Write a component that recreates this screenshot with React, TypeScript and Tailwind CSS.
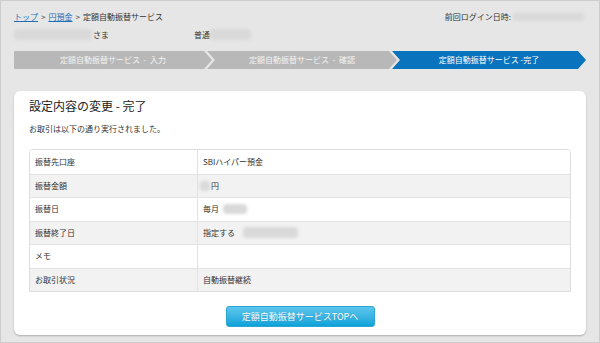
import React from 'react'

const jp = { fontFamily: '"Noto Sans CJK JP", "Noto Sans", sans-serif' }

function Blur({ className }: { className: string }) {
  return <span className={`inline-block rounded-sm bg-[#d9d9d9] blur-[1.5px] ${className}`} />
}

const steps = [
  { label: '定額自動振替サービス - 入力', active: false, width: 'w-[198px]' },
  { label: '定額自動振替サービス - 確認', active: false, width: 'w-[190px] -ml-[5px]' },
  { label: '定額自動振替サービス -完了', active: true, width: 'flex-1 -ml-[5px]' },
]

const rows: { label: string; value: React.ReactNode }[] = [
  { label: '振替先口座', value: 'SBIハイパー預金' },
  {
    label: '振替金額',
    value: (
      <span className="flex items-center gap-[1px]">
        <Blur className="w-[10px] h-[10px] -ml-[3px]" />
        円
      </span>
    ),
  },
  {
    label: '振替日',
    value: (
      <span className="flex items-center gap-[4px]">
        毎月
        <Blur className="w-[24px] h-[10px]" />
      </span>
    ),
  },
  {
    label: '振替終了日',
    value: (
      <span className="flex items-center gap-[8px]">
        指定する
        <Blur className="w-[55px] h-[11px]" />
      </span>
    ),
  },
  { label: 'メモ', value: '' },
  { label: 'お取引状況', value: '自動振替継続' },
]

export default function App() {
  return (
    <div
      style={jp}
      className="w-[600px] h-[343px] overflow-hidden bg-[#e6e6e6] border border-[#cdcdcd] px-[13px] pt-[9px] text-[#333] text-[8px]"
    >
      {/* Header */}
      <div className="flex items-center justify-between h-[13px]">
        <div className="flex items-center gap-[3px]">
          <a className="text-[#1f6fb5] underline">トップ</a>
          <span>&gt;</span>
          <a className="text-[#1f6fb5] underline">円預金</a>
          <span>&gt;</span>
          <span>定額自動振替サービス</span>
        </div>
        <div className="flex items-center gap-[2px] pr-[2px]">
          <span>前回ログイン日時:</span>
          <Blur className="w-[71px] h-[8px]" />
        </div>
      </div>
      <div className="flex items-center h-[13px] mt-[5px]">
        <Blur className="w-[78px] h-[11px]" />
        <span className="ml-[1px]">さま</span>
        <span className="ml-[85px]">普通</span>
        <Blur className="w-[41px] h-[11px]" />
      </div>

      {/* Steps */}
      <div className="flex h-[18px] mt-[10px]">
        {steps.map((s, i) => (
          <div
            key={s.label}
            className={`${s.width} flex items-center justify-center whitespace-pre ${
              i === 0
                ? '[clip-path:polygon(0_0,calc(100%-8px)_0,100%_50%,calc(100%-8px)_100%,0_100%)]'
                : '[clip-path:polygon(0_0,calc(100%-8px)_0,100%_50%,calc(100%-8px)_100%,0_100%,8px_50%)]'
            } ${s.active ? 'bg-[#0a73bd] text-white' : 'bg-[#b8b8b8] text-[#f3f3f3]'}`}
          >
            {s.label.replace(' - ', '  -  ')}
          </div>
        ))}
      </div>

      {/* Card */}
      <div className="mt-[22px] h-[244px] bg-white rounded-[6px] shadow-[0_1px_2px_rgba(0,0,0,0.25)] px-[15px] pt-[7px] flex flex-col">
        <h1 className="text-[12px] leading-[16px] text-[#222] whitespace-pre">設定内容の変更 - 完了</h1>
        <p className="mt-[9px] leading-[12px]">お取引は以下の通り実行されました。</p>

        <div className="mt-[14px] border border-[#dedede] rounded-t-[4px] overflow-hidden">
          {rows.map((r, i) => (
            <div
              key={r.label}
              className={`flex h-[23.5px] ${i > 0 ? 'border-t border-[#e2e2e2]' : ''} ${
                i % 2 === 1 ? 'bg-[#f2f2f2]' : 'bg-white'
              }`}
            >
              <div className="w-[168px] flex items-center pl-[5px] border-r border-[#e2e2e2]">{r.label}</div>
              <div className="flex-1 flex items-center pl-[5px]">{r.value}</div>
            </div>
          ))}
        </div>

        <div className="flex justify-center mt-[14px]">
          <button className="w-[149px] h-[21px] rounded-[3px] border border-[#2aa5d6] bg-gradient-to-b from-[#5ac6ec] to-[#03a2d9] text-white text-[9px] [text-shadow:0_0_1px_rgba(0,0,0,0.2)]">
            定額自動振替サービスTOPへ
          </button>
        </div>
      </div>
    </div>
  )
}
